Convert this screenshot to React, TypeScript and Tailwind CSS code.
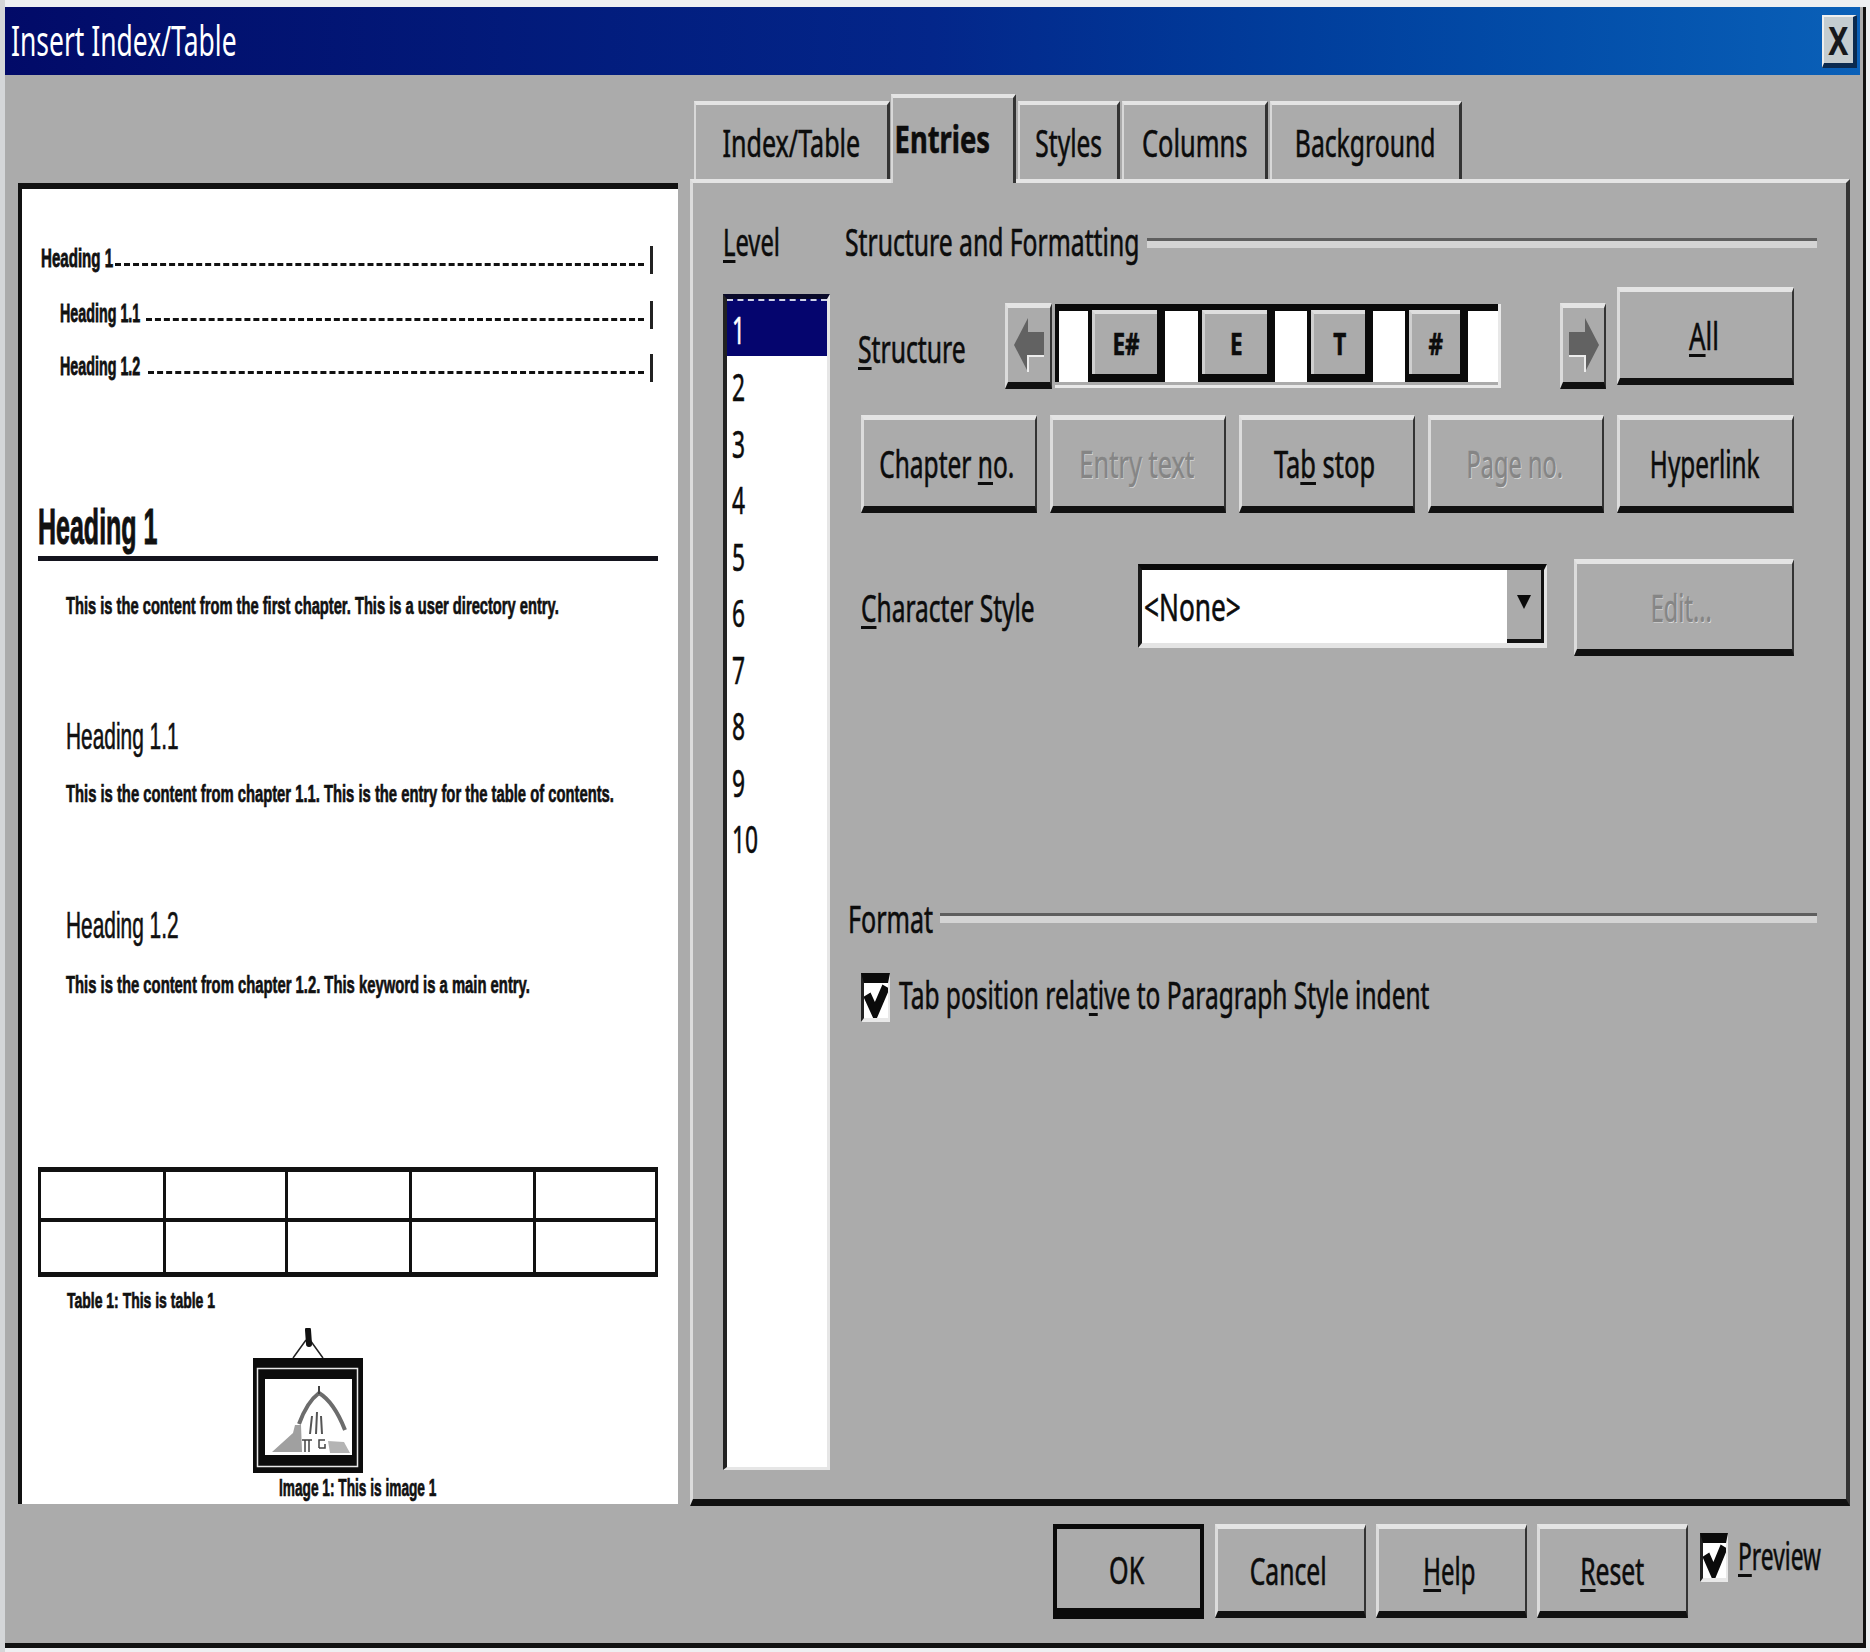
import React from "react";

function T({ c, children }: { c: string; children: React.ReactNode }) {
  return <span className={`inline-block whitespace-nowrap leading-none ${c}`}>{children}</span>;
}

function U({ children }: { children: React.ReactNode }) {
  return <span className="underline decoration-[3px] underline-offset-[4px]">{children}</span>;
}

function Raised({ c, children }: { c: string; children?: React.ReactNode }) {
  return (
    <div className={`flex shrink-0 items-center justify-center bg-[#ababab] border-t-[5px] border-l-[3px] border-r-[2px] border-b-[7px] border-t-[#e4e4e4] border-l-[#dcdcdc] border-r-[#333333] border-b-[#111111] text-[38px] ${c}`}>
      {children}
    </div>
  );
}

function Tab({ c, children }: { c: string; children: React.ReactNode }) {
  return (
    <div className={`flex shrink-0 items-center justify-center bg-[#ababab] border-t-[4px] border-l-[2px] border-r-[3px] border-t-[#e4e4e4] border-l-[#d8d8d8] border-r-[#333333] text-[38px] text-[#0c0c0c] ${c}`}>
      {children}
    </div>
  );
}

function Token({ c, children }: { c: string; children: React.ReactNode }) {
  return (
    <div className={`flex shrink-0 flex-col border-x-[4px] border-t-[6px] border-b-[8px] border-[#0a0a0a] h-[78px] ${c}`}>
      <div className="flex flex-1 items-center justify-center bg-[#ababab] border-t-[4px] border-l-[3px] border-t-[#dedede] border-l-[#cfcfcf] text-[30px] font-bold text-[#0c0c0c]">
        {children}
      </div>
    </div>
  );
}

function Gap({ c }: { c: string }) {
  return <div className={`shrink-0 h-[78px] bg-white border-t-[7px] border-l-[4px] border-[#0a0a0a] ${c}`} />;
}

function Check({ c }: { c: string }) {
  return (
    <div className={`flex shrink-0 flex-col bg-white border-t-[10px] border-t-[#0a0a0a] border-l-[3px] border-l-[#222222] border-r-[2px] border-r-[#e8e8e8] border-b-[4px] border-b-[#e8e8e8] ${c}`}>
      <svg viewBox="0 0 24 30" className="h-full w-full" preserveAspectRatio="none">
        <path d="M3 10 L11 25 L22 3" fill="none" stroke="#0a0a0a" strokeWidth="8" />
      </svg>
    </div>
  );
}

function Arrow({ flip }: { flip?: boolean }) {
  return (
    <svg viewBox="0 0 30 54" className={`h-[54px] w-[30px] ${flip ? "-scale-x-100" : ""}`}>
      <polygon points="0,27 14,0 14,14 30,14 30,38 14,38 14,54" fill="#626262" />
      <polyline points="14,54 14,38 30,38" fill="none" stroke="#ececec" strokeWidth="2" />
    </svg>
  );
}

function Groove({ c }: { c: string }) {
  return <div className={`h-[10px] border-t-[3px] border-t-[#5e5e5e] bg-[#d4d4d4] ${c}`} />;
}

function Dashes() {
  return <div className="mb-[8px] min-w-0 flex-1 border-b-[3px] border-dashed border-[#111111]" />;
}

function TocRow({ c, label, sc, w }: { c: string; label: string; sc: string; w: string }) {
  return (
    <div className={`mr-[5px] flex items-end ${c}`}>
      <div className={`shrink-0 ${w}`}>
        <T c={`origin-left text-[26px] font-bold text-[#111111] [-webkit-text-stroke-width:0.8px] ${sc}`}>{label}</T>
      </div>
      <Dashes />
      <div className="ml-[6px] h-[28px] w-[3px] bg-[#222222]" />
    </div>
  );
}

const colClass = (i: number) =>
  `border-[#111111] ${i % 5 !== 4 ? "border-r-[3px]" : ""} ${i < 5 ? "border-b-[4px]" : ""}`;

const DIS = "text-[#858585] [text-shadow:1px_1px_0_#e2e2e2]";

export default function App() {
  const levels = ["2", "3", "4", "5", "6", "7", "8", "9", "10"];
  return (
    <div className="h-[1652px] w-[1870px] overflow-hidden border-l-[5px] border-l-[#d4d6d8] bg-[#eef0f2] pt-[7px] font-['Noto_Sans',sans-serif]">
      <div className="h-[1641px] w-[1861px] border-r-[3px] border-b-[5px] border-[#111111] bg-[#ababab]">
        {/* Title bar */}
        <div className="mr-[3px] flex h-[68px] items-center justify-between bg-gradient-to-r from-[#020a68] via-[#03268a] to-[#0a60b8] pr-[3px] pl-[6px]">
          <T c="origin-left -mt-[2px] scale-x-[0.63] text-[42px] text-white">Insert Index/Table</T>
          <div className="flex h-[53px] w-[35px] items-center justify-center border-t-[2px] border-l-[2px] border-r-[4px] border-b-[5px] border-t-[#eeeeee] border-l-[#eeeeee] border-r-[#0a2a50] border-b-[#0a2a50] bg-[#c4ccd0] text-[40px] font-bold text-[#16181c]">
            <T c="scale-x-[0.75]">X</T>
          </div>
        </div>

        {/* Body */}
        <div className="flex h-[1431px] pl-[13px]">
          {/* Preview */}
          <div className="mt-[108px] h-[1321px] w-[660px] shrink-0 border-t-[6px] border-l-[4px] border-[#111111] bg-white pr-[20px] pl-[16px] font-['Liberation_Sans',sans-serif] text-[#111111]">
            <TocRow c="ml-[3px] mt-[57px] h-[28px]" label="Heading 1" w="w-[74px]" sc="scale-x-[0.58]" />
            <TocRow c="ml-[22px] mt-[27px] h-[28px]" label="Heading 1.1" w="w-[86px]" sc="scale-x-[0.55]" />
            <TocRow c="ml-[22px] mt-[25px] h-[28px]" label="Heading 1.2" w="w-[88px]" sc="scale-x-[0.55]" />

            <div className="mt-[120px] h-[59px] border-b-[5px] border-[#14141e]">
              <T c="origin-left scale-x-[0.5] text-[50px] font-bold [-webkit-text-stroke-width:1px]">Heading 1</T>
            </div>
            <div className="mt-[33px] ml-[28px] h-[24px]">
              <T c="origin-left scale-x-[0.612] text-[24px] font-bold [-webkit-text-stroke-width:0.7px]">This is the content from the first chapter. This is a user directory entry.</T>
            </div>
            <div className="mt-[101px] ml-[28px] h-[36px]">
              <T c="origin-left scale-x-[0.58] text-[36px] [-webkit-text-stroke-width:0.6px]">Heading 1.1</T>
            </div>
            <div className="mt-[27px] ml-[28px] h-[24px]">
              <T c="origin-left scale-x-[0.616] text-[24px] font-bold [-webkit-text-stroke-width:0.7px]">This is the content from chapter 1.1. This is the entry for the table of contents.</T>
            </div>
            <div className="mt-[102px] ml-[28px] h-[36px]">
              <T c="origin-left scale-x-[0.58] text-[36px] [-webkit-text-stroke-width:0.6px]">Heading 1.2</T>
            </div>
            <div className="mt-[29px] ml-[28px] h-[24px]">
              <T c="origin-left scale-x-[0.617] text-[24px] font-bold [-webkit-text-stroke-width:0.7px]">This is the content from chapter 1.2. This keyword is a main entry.</T>
            </div>

            <div className="mt-[170px] grid h-[110px] w-[620px] grid-cols-[124.5px_122.5px_124px_124px_1fr] grid-rows-2 border-x-[3px] border-t-[5px] border-b-[5px] border-[#111111]">
              {Array.from({ length: 10 }).map((_, i) => (
                <div key={i} className={colClass(i)} />
              ))}
            </div>
            <div className="mt-[13px] ml-[29px] h-[22px]">
              <T c="origin-left scale-x-[0.635] text-[22px] font-bold [-webkit-text-stroke-width:0.7px]">Table 1: This is table 1</T>
            </div>
            <svg viewBox="0 0 112 146" className="mt-[16px] ml-[214px] block h-[146px] w-[112px]">
              <path d="M41 30 L54 12 M71 30 L58 12" stroke="#222222" strokeWidth="1.5" fill="none" />
              <path d="M56 2 L57 16" stroke="#111111" strokeWidth="6" strokeLinecap="round" />
              <rect x="1" y="30" width="110" height="115" fill="#0c0c0c" />
              <rect x="5.5" y="40.5" width="100" height="98" fill="none" stroke="#e8e8e8" strokeWidth="1.5" />
              <rect x="13" y="51" width="87" height="76" fill="#ffffff" />
              <path d="M47 96 Q55 74 67 65 Q82 74 93 102" fill="none" stroke="#6c6c6c" strokeWidth="4" />
              <path d="M67 58 L67 66" stroke="#444444" strokeWidth="2" />
              <path d="M58 106 L60 88 M64 106 L65 84 M70 106 L69 88" stroke="#555555" strokeWidth="2" />
              <polygon points="20,124 41,105 43,97 49,97 50,124" fill="#a0a0a0" />
              <path d="M53 124 L53 112 M50 112 L60 112 M57 124 L57 112 M67 120 L67 112 L73 112 M67 120 L73 120 L73 116" stroke="#444444" strokeWidth="1.5" fill="none" />
              <polygon points="76,113 92,114 98,125 78,125" fill="#b4b4b4" />
            </svg>
            <div className="mt-[2px] ml-[241px] h-[26px]">
              <T c="origin-left scale-x-[0.57] text-[24px] font-bold [-webkit-text-stroke-width:0.7px]">Image 1: This is image 1</T>
            </div>
          </div>

          {/* Tabs */}
          <div className="ml-[12px] mt-[20px] w-[1160px] shrink-0">
            <div className="flex h-[84px] items-end pl-[4px] gap-[2px] [-webkit-text-stroke-width:0.6px]">
              <Tab c="h-[78px] w-[196px]"><T c="scale-x-[0.66]">Index/Table</T></Tab>
              <Tab c="relative z-10 -ml-[1px] -mb-[4px] h-[89px] w-[125px] pr-[22px] pb-[6px] font-bold"><T c="scale-x-[0.72]">Entries</T></Tab>
              <Tab c="h-[78px] w-[102px]"><T c="scale-x-[0.645]">Styles</T></Tab>
              <Tab c="h-[78px] w-[146px]"><T c="scale-x-[0.67]">Columns</T></Tab>
              <Tab c="h-[78px] w-[192px]"><T c="scale-x-[0.65]">Background</T></Tab>
            </div>
            <div className="flex h-[1327px] border-t-[4px] border-l-[3px] border-r-[4px] border-b-[7px] border-t-[#e4e4e4] border-l-[#dcdcdc] border-r-[#333333] border-b-[#111111] pl-[30px] text-[38px] leading-none text-[#0c0c0c] [-webkit-text-stroke-width:0.6px]">
              {/* Level */}
              <div className="w-[107px] shrink-0 pt-[39px]">
                <div className="h-[40px]">
                  <T c="origin-left scale-x-[0.625]"><U>L</U>evel</T>
                </div>
                <div className="mt-[32px] h-[1176px] border-t-[5px] border-l-[4px] border-r-[3px] border-b-[3px] border-t-[#0a0a2a] border-l-[#222222] border-r-[#e6e6e6] border-b-[#e6e6e6] bg-white text-[38px]">
                  <div className="flex h-[57px] items-center border-t-[2px] border-dashed border-[#cfd2e8] bg-[#05056e] pl-[5px] text-white">
                    <T c="origin-left scale-x-[0.6]">1</T>
                  </div>
                  <div className="pt-[2px]">
                    {levels.map((l) => (
                      <div key={l} className="flex h-[56.5px] items-center pl-[5px]">
                        <T c="origin-left scale-x-[0.6]">{l}</T>
                      </div>
                    ))}
                  </div>
                </div>
              </div>

              {/* Structure and Formatting */}
              <div className="ml-[15px] w-[972px] shrink-0 pt-[40px]">
                <div className="flex h-[40px] items-center">
                  <div className="mb-[5px] w-[302px] shrink-0">
                    <T c="origin-left scale-x-[0.65]">Structure and Formatting</T>
                  </div>
                  <Groove c="flex-1" />
                </div>

                {/* Structure row */}
                <div className="mt-[24px] flex h-[102px] items-start pl-[13px]">
                  <div className="mt-[42px] w-[147px] shrink-0">
                    <T c="origin-left scale-x-[0.65]"><U>S</U>tructure</T>
                  </div>
                  <Raised c="mt-[16px] h-[86px] w-[47px]"><Arrow /></Raised>
                  <div className="mt-[17px] ml-[3px] flex h-[84px] w-[446px] shrink-0 border-r-[3px] border-b-[3px] border-r-[#e8e8e8] border-b-[#e8e8e8]">
                    <Gap c="w-[33px]" />
                    <Token c="w-[73px]"><T c="scale-x-[0.75]">E#</T></Token>
                    <Gap c="w-[37px]" />
                    <Token c="w-[73px]"><T c="scale-x-[0.75]">E</T></Token>
                    <Gap c="w-[36px]" />
                    <Token c="w-[62px]"><T c="scale-x-[0.75]">T</T></Token>
                    <Gap c="w-[36px]" />
                    <Token c="w-[59px]"><T c="scale-x-[0.75]">#</T></Token>
                    <Gap c="w-[34px]" />
                  </div>
                  <Raised c="mt-[16px] ml-[59px] h-[86px] w-[46px]"><Arrow flip /></Raised>
                  <Raised c="ml-[11px] h-[98px] w-[177px] pr-[4px]"><T c="scale-x-[0.68]"><U>A</U>ll</T></Raised>
                </div>

                {/* Token buttons */}
                <div className="mt-[26px] flex gap-[13px] pl-[16px]">
                  <Raised c="h-[98px] w-[176px] pr-[6px]"><T c="scale-x-[0.645]">Chapter <U>n</U>o.</T></Raised>
                  <Raised c={`h-[98px] w-[176px] pr-[4px] ${DIS}`}><T c="scale-x-[0.67]">Entry text</T></Raised>
                  <Raised c="h-[98px] w-[176px] pr-[6px]"><T c="scale-x-[0.67]">Ta<U>b</U> stop</T></Raised>
                  <Raised c={`h-[98px] w-[176px] pr-[4px] ${DIS}`}><T c="scale-x-[0.62]">Page no.</T></Raised>
                  <Raised c="h-[98px] w-[177px] pr-[3px]"><T c="scale-x-[0.64]">Hyperlink</T></Raised>
                </div>

                {/* Character style */}
                <div className="mt-[46px] flex h-[97px] items-start pl-[16px]">
                  <div className="mt-[29px] w-[277px] shrink-0">
                    <T c="origin-left scale-x-[0.645]"><U>C</U>haracter Style</T>
                  </div>
                  <div className="mt-[5px] flex h-[84px] w-[409px] shrink-0 border-t-[6px] border-l-[4px] border-r-[3px] border-b-[5px] border-t-[#0a0a0a] border-l-[#1a1a1a] border-r-[#e4e4e4] border-b-[#e4e4e4] bg-white">
                    <div className="flex-1 pt-[17px] pl-[2px]">
                      <T c="origin-left scale-x-[0.69]">{"<None>"}</T>
                    </div>
                    <div className="flex h-full w-[37px] items-center justify-center border-r-[3px] border-b-[4px] border-[#111111] bg-[#ababab] pb-[6px]">
                      <svg viewBox="0 0 14 14" className="h-[14px] w-[14px]">
                        <polygon points="0,0 14,0 7,14" fill="#0a0a0a" />
                      </svg>
                    </div>
                  </div>
                  <Raised c={`ml-[27px] h-[97px] w-[220px] pr-[6px] ${DIS}`}><T c="scale-x-[0.62]">Edit...</T></Raised>
                </div>

                {/* Format */}
                <div className="mt-[242px] flex h-[40px] items-center pl-[3px]">
                  <div className="w-[92px] shrink-0">
                    <T c="origin-left scale-x-[0.66]">Format</T>
                  </div>
                  <Groove c="flex-1" />
                </div>
                <div className="mt-[35px] flex items-start pl-[16px]">
                  <Check c="h-[49px] w-[29px]" />
                  <div className="mt-[2px] ml-[9px]">
                    <T c="origin-left scale-x-[0.645]">Tab position rela<U>t</U>ive to Paragraph Style indent</T>
                  </div>
                </div>
              </div>
            </div>
          </div>
        </div>

        {/* Footer */}
        <div className="flex items-start pt-[18px] pl-[1048px] text-[38px] leading-none text-[#0c0c0c] [-webkit-text-stroke-width:0.6px]">
          <div className="flex h-[95px] w-[151px] shrink-0 items-center justify-center border-t-[5px] border-x-[4px] border-b-[11px] border-[#0a0a0a] bg-[#ababab] pr-[3px]">
            <T c="scale-x-[0.66]">OK</T>
          </div>
          <Raised c="ml-[11px] h-[94px] w-[151px] pr-[6px]"><T c="scale-x-[0.65]">Cancel</T></Raised>
          <Raised c="ml-[10px] h-[94px] w-[151px] pr-[6px]"><T c="scale-x-[0.63]"><U>H</U>elp</T></Raised>
          <Raised c="ml-[10px] h-[94px] w-[151px] pr-[2px]"><T c="scale-x-[0.65]"><U>R</U>eset</T></Raised>
          <Check c="ml-[12px] mt-[9px] h-[49px] w-[28px]" />
          <div className="mt-[12px] ml-[10px]">
            <T c="origin-left scale-x-[0.6]"><U>P</U>review</T>
          </div>
        </div>
      </div>
    </div>
  );
}
